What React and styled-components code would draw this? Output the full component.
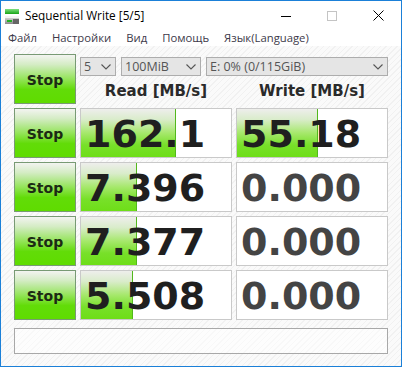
import React from "react";
import styled, { createGlobalStyle } from "styled-components";

const GlobalStyle = createGlobalStyle`
  html, body { margin: 0; padding: 0; width: 402px; height: 367px; overflow: hidden; background: #fff; }
  * { box-sizing: border-box; }
`;

const Window = styled.div`
  width: 402px;
  height: 367px;
  border: 1px solid #1b80d8;
  display: flex;
  flex-direction: column;
  background: #fff;
  font-family: "Open Sans", "Noto Sans", sans-serif;
`;

const TitleBar = styled.div`
  height: 29px;
  display: flex;
  align-items: center;
  padding-left: 3px;
  background: #fff;
`;

const Title = styled.span`
  margin-left: 5px;
  font-size: 11.8px;
  color: #000;
  flex: 1;
  margin-top: -1px;
`;

const CaptionButton = styled.div`
  width: 46px;
  height: 29px;
  display: flex;
  align-items: center;
  justify-content: center;
`;

const MenuBar = styled.div`
  height: 16px;
  display: flex;
  align-items: center;
  padding-left: 7px;
  gap: 15px;
  background: #fff;
`;

const MenuItem = styled.span`
  font-size: 11.3px;
  color: #3d3a4a;
  line-height: 16px;
`;

const Content = styled.div`
  flex: 1;
  padding: 8px 13px 8px 13px;
  background: repeating-linear-gradient(135deg, #f1f1f1 0 1px, #fafafa 1px 4px);
  display: grid;
  grid-template-columns: 62px 152px 152px;
  grid-template-rows: 50px 50px 50px 50px 50px 30px;
  column-gap: 4px;
  row-gap: 4px;
`;

const StopButton = styled.div`
  border: 1px solid #789a74;
  background: linear-gradient(180deg, #f3f4f1 0%, #d4ecc4 20%, #94e45a 50%, #62dc08 72%, #5fdc00 100%);
  display: flex;
  align-items: center;
  justify-content: center;
  font-family: "DejaVu Sans", Verdana, sans-serif;
  font-weight: bold;
  font-size: 14px;
  color: #1c2a14;
  padding-top: 1px;
`;

const Controls = styled.div`
  grid-column: 2 / 4;
  display: flex;
  flex-direction: column;
  padding-top: 3px;
`;

const SelectRow = styled.div`
  display: flex;
  gap: 5px;
  height: 19px;
`;

const Select = styled.div`
  width: ${(p) => p.$w}px;
  height: 19px;
  background: #e5e5e5;
  border: 1px solid #adadad;
  display: flex;
  align-items: center;
  padding-left: 3px;
  padding-right: 4px;
  font-size: 12.5px;
  color: #555;
  justify-content: space-between;
`;

const Headers = styled.div`
  flex: 1;
  display: grid;
  grid-template-columns: 152px 152px;
  column-gap: 4px;
  align-items: center;
  padding-top: 1px;
`;

const Header = styled.div`
  text-align: center;
  font-family: "DejaVu Sans", Verdana, sans-serif;
  font-weight: bold;
  font-size: 15px;
  color: #2a2a2a;
`;

const ValueBox = styled.div`
  position: relative;
  border: 1px solid #c9c9c9;
  background: #fff;
  overflow: hidden;
`;

const Fill = styled.div`
  position: absolute;
  left: 0;
  top: 0;
  bottom: 0;
  background: linear-gradient(180deg, #eeeeec 0%, #d9ecca 22%, #a6e86c 50%, #78e02a 75%, #6ede18 100%);
  border-right: 1px solid #52b81c;
`;

const Value = styled.div`
  position: relative;
  height: 100%;
  display: flex;
  align-items: center;
  padding-left: 4px;
  padding-top: 1px;
  font-family: "DejaVu Sans", Verdana, sans-serif;
  font-weight: bold;
  font-size: 38px;
  color: ${(p) => (p.$dim ? "#444444" : "#1f1f1f")};
`;

const StatusBar = styled.div`
  grid-column: 1 / 4;
  margin-top: 4px;
  border: 1px solid #a8a8a8;
  background: rgba(255, 255, 255, 0.5);
`;

const Chevron = () => (
  <svg width="10" height="6" viewBox="0 0 10 6">
    <path d="M0.5 0.5 L5 5 L9.5 0.5" fill="none" stroke="#555" strokeWidth="1.1" />
  </svg>
);

const AppIcon = () => (
  <svg width="16" height="16" viewBox="0 0 16 16">
    <defs>
      <linearGradient id="gtop" x1="0" y1="0" x2="0" y2="1">
        <stop offset="0" stopColor="#7fe07f" />
        <stop offset="1" stopColor="#16a316" />
      </linearGradient>
      <linearGradient id="gbot" x1="0" y1="0" x2="0" y2="1">
        <stop offset="0" stopColor="#e8e8e8" />
        <stop offset="1" stopColor="#8a8a8a" />
      </linearGradient>
    </defs>
    <rect x="1" y="1" width="14" height="5" fill="url(#gtop)" />
    <rect x="1" y="8" width="14" height="8" fill="url(#gbot)" />
    <rect x="1" y="8" width="14" height="2" fill="#f4f4f4" />
    <rect x="3" y="12" width="5" height="2" fill="#22b022" />
    <rect x="9" y="11" width="6" height="5" fill="#666" />
  </svg>
);

const rows = [
  { read: "162.1", write: "55.18", rf: 95, wf: 81 },
  { read: "7.396", write: "0.000", rf: 56, wf: 0 },
  { read: "7.377", write: "0.000", rf: 56, wf: 0 },
  { read: "5.508", write: "0.000", rf: 52, wf: 0 },
];

export default function App() {
  return (
    <>
      <GlobalStyle />
      <Window>
        <TitleBar>
          <AppIcon />
          <Title>Sequential Write [5/5]</Title>
          <CaptionButton>
            <svg width="10" height="10" viewBox="0 0 10 10">
              <path d="M0 5.5 H10" stroke="#000" strokeWidth="1" />
            </svg>
          </CaptionButton>
          <CaptionButton>
            <svg width="10" height="10" viewBox="0 0 10 10">
              <rect x="0.5" y="0.5" width="9" height="9" fill="none" stroke="#c4c4c4" strokeWidth="1" />
            </svg>
          </CaptionButton>
          <CaptionButton>
            <svg width="11" height="11" viewBox="0 0 11 11">
              <path d="M0.5 0.5 L10.5 10.5 M10.5 0.5 L0.5 10.5" stroke="#000" strokeWidth="1" />
            </svg>
          </CaptionButton>
        </TitleBar>
        <MenuBar>
          <MenuItem>Файл</MenuItem>
          <MenuItem>Настройки</MenuItem>
          <MenuItem>Вид</MenuItem>
          <MenuItem>Помощь</MenuItem>
          <MenuItem>Язык(Language)</MenuItem>
        </MenuBar>
        <Content>
          <StopButton>Stop</StopButton>
          <Controls>
            <SelectRow>
              <Select $w={36}>
                <span>5</span>
                <Chevron />
              </Select>
              <Select $w={80}>
                <span>100MiB</span>
                <Chevron />
              </Select>
              <Select $w={182}>
                <span>E: 0% (0/115GiB)</span>
                <Chevron />
              </Select>
            </SelectRow>
            <Headers>
              <Header>Read [MB/s]</Header>
              <Header>Write [MB/s]</Header>
            </Headers>
          </Controls>
          {rows.map((r, i) => (
            <React.Fragment key={i}>
              <StopButton>Stop</StopButton>
              <ValueBox>
                {r.rf > 0 && <Fill style={{ width: r.rf }} />}
                <Value>{r.read}</Value>
              </ValueBox>
              <ValueBox>
                {r.wf > 0 && <Fill style={{ width: r.wf }} />}
                <Value $dim={r.wf === 0}>{r.write}</Value>
              </ValueBox>
            </React.Fragment>
          ))}
          <StatusBar />
        </Content>
      </Window>
    </>
  );
}
